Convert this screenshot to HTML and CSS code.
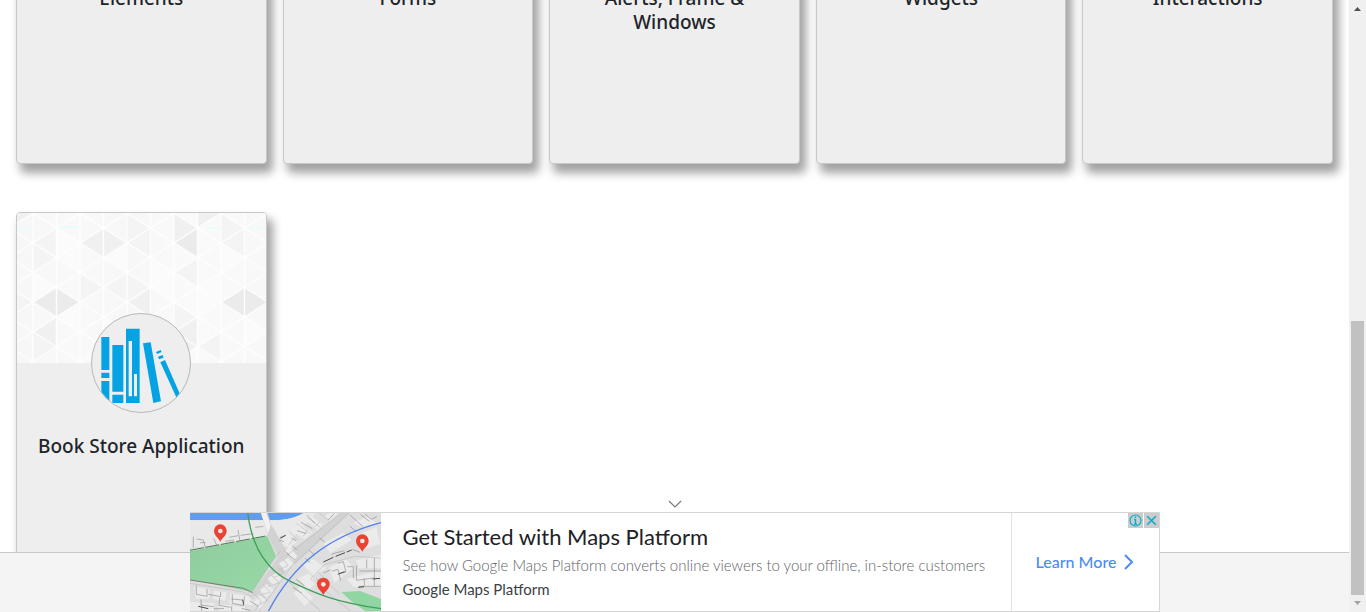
FILE: index.html
```html
<!DOCTYPE html>
<html lang="en">
<head>
<meta charset="utf-8">
<title>DEMOQA</title>
<meta name="viewport" content="width=device-width, initial-scale=1">
<link rel="stylesheet" href="styles.css">
</head>
<body>
<div class="window">
  <div class="view">
    <main class="cards">
      <a class="card" href="#elements"><span class="card-cover"></span><span class="card-avatar"></span><h5 class="card-title">Elements</h5></a>
      <a class="card" href="#forms"><span class="card-cover"></span><span class="card-avatar"></span><h5 class="card-title">Forms</h5></a>
      <a class="card" href="#windows"><span class="card-cover"></span><span class="card-avatar"></span><h5 class="card-title">Alerts, Frame &amp; Windows</h5></a>
      <a class="card" href="#widgets"><span class="card-cover"></span><span class="card-avatar"></span><h5 class="card-title">Widgets</h5></a>
      <a class="card" href="#interaction"><span class="card-cover"></span><span class="card-avatar"></span><h5 class="card-title">Interactions</h5></a>
      <a class="card" href="#books">
        <svg class="card-cover" viewBox="50 39 750 450" preserveAspectRatio="xMidYMid slice" aria-hidden="true">
          <defs>
            <linearGradient id="paper" x1="0" x2="1" y1="0" y2="0">
              <stop offset="0" stop-color="#f7f7f7"/><stop offset=".25" stop-color="#f9f9f9"/><stop offset=".45" stop-color="#f7f7f7"/><stop offset=".7" stop-color="#fafafa"/><stop offset="1" stop-color="#f8f8f8"/>
            </linearGradient>
            <pattern id="mesh" x="100" y="39.5" width="141" height="89" patternUnits="userSpaceOnUse">
              <path d="M0 0V89M141 0V89M70.500 0V89M0 0L141 89M0 89L141 0" fill="none" stroke="#fefefe" stroke-width="4"/>
            </pattern>
          </defs>
          <rect x="50" y="39" width="750" height="450" fill="url(#paper)"/>
          <g fill="#fbfbfb">
            <path d="M170 85L241 128L170 173ZM241 128V218L170 173ZM382 128V218L311 173ZM452 173L523 218L452 263ZM523 218V308L452 263ZM664 128L735 173L664 218ZM664 218V308L593 263ZM593 263L664 308L593 352ZM100 218L170 263L100 308ZM311 352L382 396L311 440ZM241 308V396L170 352ZM735 352L800 396L735 440Z"/>
          </g>
          <g fill="#f3f3f3">
            <path d="M241 218L311 263L241 308ZM382 218V308L311 263ZM382 218L452 263L382 308ZM100 128L170 173L100 218ZM382 39L452 85L382 128ZM593 173V263L523 218ZM523 308L593 352L523 396ZM664 39L735 85L664 128ZM170 85V173L100 128ZM664 396V489L593 440ZM29 263L100 308L29 352ZM735 85V173L664 128ZM100 396L170 440L100 489ZM452 85V173L382 128Z" opacity=".8"/>
          </g>
          <g fill="#f0f0f0">
            <path d="M29 -4V85L100 39ZM523 39L593 85L523 128ZM593 -4L664 39L593 85ZM311 85L382 128L311 173L241 128ZM452 263V352L385 308ZM593 352V440L523 396ZM593 440L560 460V420ZM170 352V440L100 396Z"/>
          </g>
          <g fill="#ebebeb">
            <path d="M593 85V173L523 128ZM170 263L241 308L170 352L100 308ZM735 263L805 308L735 352L664 308Z"/>
          </g>
          <rect x="50" y="39" width="750" height="450" fill="url(#mesh)"/>
          <path d="M52 85H98M180 82H240M622 85H664M750 83H798" stroke="#e6fdfa" stroke-width="6" fill="none"/>
        </svg>
        <span class="card-avatar">
          <svg viewBox="36 42 294 294" aria-hidden="true">
            <g fill="#05a3e4">
              <path d="M64 111H88V210H64ZM64 218H88V234H64ZM64 243H88V309H64ZM97 135H130V275H97ZM97 284H130V309H97Z"/>
              <path fill-rule="evenodd" d="M138 86H179V309H138ZM146 123V289H156V123ZM162 222V289H171V222Z"/>
              <path d="M189 130L212 127L243 304L220 309ZM228 156L242 150L245 156L231 162ZM234 170L248 165L251 173L237 178ZM241 187L255 180L306 296L293 301Z"/>
            </g>
          </svg>
        </span>
        <h5 class="card-title">Book Store Application</h5>
      </a>
    </main>

    <aside class="anchor" aria-label="Advertisement">
      <button class="collapse" type="button" aria-label="Hide advertisement">
        <svg viewBox="0 0 14 8"><path d="M1 1L7 7L13 1" fill="none" stroke="#777" stroke-width="1.200"/></svg>
      </button>
      <div class="ad">
        <svg class="map" viewBox="30 66 573 300" preserveAspectRatio="xMidYMid slice" aria-hidden="true">
          <defs>
            <linearGradient id="park" x1="0" y1="0" x2="1" y2="1"><stop offset="0" stop-color="#8fcb9d"/><stop offset="1" stop-color="#97daa6"/></linearGradient>
            <g id="pin">
              <path d="M0 52C-3 41 -19 34 -19 18A19 19 0 0 1 19 18C19 34 3 41 0 52Z" fill="#ea4335"/>
              <circle cy="19" r="7" fill="#fde9df"/>
            </g>
          </defs>
          <rect x="30" y="66" width="573" height="300" fill="#dedede"/>
          <path d="M30 66H375C350 84 315 90 280 90H30Z" fill="#629ded"/>
          <path d="M30 91H280C320 90 350 84 375 66H410L300 185L270 140L30 175Z" fill="#e9e9e9"/>
          <path d="M242 66H262L275 108C286 118 294 145 325 188L490 66H512L350 218L230 318H210L295 202L262 132Z" fill="#d2d2d2"/>
          <path d="M242 66H258L272 105L264 132Z" fill="#f1f1f1"/>
          <path d="M30 184L262 138L288 198L218 306L30 269Z" fill="url(#park)"/>
          <path d="M30 181L262 137" stroke="#4b7854" stroke-width="3" stroke-dasharray="42 5"/>
          <path d="M30 270L190 295L218 308" fill="none" stroke="#777b77" stroke-width="3"/>
          <path d="M484 306L540 303L603 327V366H560L516 335Z" fill="#91d6a2"/>
          <g fill="#ebebeb">
            <path d="M300 140L320 125L350 155L326 177ZM334 120L352 96L396 128L374 149ZM376 90L392 75L428 104L414 119ZM434 80L450 66H478L450 93ZM312 185L330 170L352 199L340 212Z"/>
            <path d="M262 266L290 247L306 268L279 286ZM240 300L260 281L283 303L258 321ZM297 220L325 202L343 222L315 243ZM222 336L240 316L261 333L244 361Z"/>
            <path d="M445 233L500 207L520 235L463 278ZM528 211L603 194V235H535ZM500 266L603 240V290H520ZM370 226L400 208L438 235L402 259ZM355 265L387 250L408 280L385 299ZM340 310L363 289L400 325L374 348Z"/>
            <path d="M43 290L88 298V326H48ZM100 303L140 306L135 332L99 327ZM151 310L205 319L228 345L148 341ZM30 336L102 340V366H30ZM115 343L195 350V366H115Z"/>
            <path d="M545 130L590 110L600 162L556 176ZM430 160L490 128L516 150L451 190ZM520 98L566 77L588 99L545 112Z"/>
          </g>
          <g fill="none" stroke="#bdbdbd" stroke-width="2">
            <path d="M510 66L338 224L236 366M488 66L326 192M603 204L526 199L435 223L392 266L473 333L516 366M413 245L480 315M327 276L424 366M220 310L244 334L222 366M30 280L190 306L222 325M300 185L206 310"/>
            <path d="M328 125L354 151M350 100L389 130M382 83L421 112M415 68L446 90M343 145L326 164M382 119L369 140M419 95L404 111M310 208L324 227L297 240M292 230L313 250L281 262M274 256L298 278L264 290M249 284L272 307L238 315M242 312L262 330L240 344"/>
          </g>
          <g fill="none" stroke="#8f8f8f" stroke-width="2">
            <path d="M40 173V140M50 147L70 150L76 173M101 145L110 165M136 154L162 150M174 120L180 153M182 136L220 131M226 112L250 109M60 158H77M148 142L174 137"/>
            <path d="M299 143L316 135M297 150L312 155M334 144L348 152M351 122L379 131M363 97L397 116M380 75L405 100M555 72L574 88L590 80M510 75L530 93M463 70L444 91M320 191L344 209M313 183L329 195M338 168L350 179"/>
            <path d="M455 244L474 238L482 272M473 220L490 215L498 246L473 253M430 249L452 239M502 230H520V265M530 226L529 270M538 243H603M560 208V235M583 204V288M529 271L581 264M536 289H603M553 265V289M455 192L493 182M517 178L540 187M510 109L529 125M532 95L550 111M542 74L568 94M418 143L435 157M388 181L405 196M375 204L390 218M348 268L373 287M338 292L366 310M409 266L420 275"/>
            <path d="M49 286V313L81 319V297M85 313L122 320V306M63 328V345L101 350M65 342V366M119 324L117 346L151 352M157 313V340L191 347M154 327L188 330M194 319L190 346M210 333L235 349M101 356H132M155 348V366M185 355L212 362"/>
          </g>
          <g fill="none" stroke="#494949" stroke-width="3"><path d="M430 216L460 202M467 199L495 188M500 186L515 180M301 145L317 136M55 349L85 356M188 329L191 344M535 292L552 290M578 267L600 265M475 252L494 245"/></g>
          <path d="M203 66C215 175 265 245 333 275C405 309 455 334 603 356" fill="none" stroke="#3f9e5a" stroke-width="4"/>
          <path d="M264 366C340 222 445 140 603 98" fill="none" stroke="#527ff0" stroke-width="4"/>
          <use href="#pin" x="121" y="104"/><use href="#pin" x="547" y="134"/><use href="#pin" x="430" y="264"/>
        </svg>
        <div class="ad-copy">
          <a class="ad-headline" href="#maps">Get Started with Maps Platform</a>
          <a class="ad-text" href="#maps">See how Google Maps Platform converts online viewers to your offline, in-store customers</a>
          <a class="ad-brand" href="#maps">Google Maps Platform</a>
        </div>
        <a class="ad-action" href="#maps">Learn More
          <svg viewBox="0 0 10 16" aria-hidden="true"><path d="M1 1L8 8L1 15" fill="none" stroke="#4a8cf7" stroke-width="2"/></svg>
        </a>
        <div class="ad-choices">
          <button type="button" aria-label="Why this ad"><svg viewBox="0 0 15 15"><g fill="none" stroke="#00aecd"><circle cx="7.500" cy="7.500" r="5.500" stroke-width="1.200"/><path d="M7.500 6.300V11M6 6.500H7.500M6 11H9M7.500 3.500V5" stroke-width="1.300"/></g></svg></button>
          <button type="button" aria-label="Close ad"><svg viewBox="0 0 15 15"><path d="M3.200 3.200L11.800 11.800M11.800 3.200L3.200 11.800" fill="none" stroke="#00aecd" stroke-width="1.500"/></svg></button>
        </div>
      </div>
    </aside>
  </div>

  <div class="scrollbar" aria-hidden="true">
    <svg viewBox="0 0 17 17"><path d="M5 11L8.500 7L12 11Z" fill="#505050"/></svg>
    <div class="track"><div class="thumb"></div></div>
    <svg viewBox="0 0 17 17"><path d="M5 6L8.500 10L12 6Z" fill="#a3a3a3"/></svg>
  </div>
</div>
</body>
</html>
```
FILE: styles.css
```css
*, *::before { box-sizing: border-box; }

body {
  margin: 0;
  background: #fff;
  color: #212529;
  font-family: "Noto Sans", "Open Sans", sans-serif;
  overflow: hidden;
}

a { color: inherit; text-decoration: none; }
svg { display: block; }
button { border: 0; padding: 0; background: none; cursor: pointer; }

.window {
  display: grid;
  grid-template-columns: minmax(0, 1fr) 17px;
  height: 100vh;
}

.view {
  position: relative;
  display: flex;
  align-items: flex-end;
  overflow: hidden;
}

/* Category cards */
.cards {
  flex: 1;
  display: grid;
  grid-template-columns: repeat(5, minmax(0, 1fr));
  gap: 48px 16px;
  padding: 0 16px;
}

.card {
  display: flex;
  flex-direction: column;
  align-items: center;
  min-height: 400px;
  border: 1px solid #c8c8c8;
  border-radius: 4px;
  background: #eee;
  box-shadow: 5px 8px 10px 1px rgba(0, 0, 0, 0.37);
  overflow: hidden;
}

.card-cover {
  width: 100%;
  height: 150px;
  background: #f8f8f8;
}

.card-avatar {
  position: relative;
  width: 100px;
  height: 100px;
  margin-top: -50px;
  border: 1px solid #b8b8b8;
  border-radius: 50%;
  background: #eee;
  overflow: hidden;
}

.card-title {
  margin: 0;
  padding: 21px 20px;
  font-size: 19px;
  line-height: 24px;
  font-weight: 500;
  text-align: center;
}

/* Bottom banner */
.anchor {
  position: absolute;
  left: 0;
  right: 0;
  bottom: 0;
  display: flex;
  flex-direction: column;
  align-items: center;
}

.anchor::before {
  content: "";
  position: absolute;
  left: 0;
  right: 0;
  bottom: 0;
  height: 60px;
  border-top: 1px solid #c8c8c8;
  background: #f4f4f4;
}

.collapse {
  padding: 4px 8px;
}

.collapse svg { width: 14px; height: 8px; }

.ad {
  position: relative;
  display: flex;
  width: 100%;
  max-width: 970px;
  height: 100px;
  border: 1px solid #d6d6d6;
  border-left: 0;
  background: #fff;
  font-family: Lato, sans-serif;
}

.map { flex: none; width: 191px; height: 100%; }

.ad-copy {
  flex: 1;
  min-width: 0;
  display: flex;
  flex-direction: column;
  padding: 8px 0 8px 22px;
  white-space: nowrap;
}

.ad-headline { font-size: 22px; line-height: 32px; color: #202124; }
.ad-text { font-size: 15px; line-height: 24px; font-weight: 300; color: #5f6368; }
.ad-brand { font-size: 15px; line-height: 24px; color: #3c4043; }

.ad-action {
  flex: none;
  display: flex;
  align-items: center;
  justify-content: center;
  gap: 8px;
  width: 148px;
  border-left: 1px solid #e2e2e2;
  color: #4a8cf7;
  font-size: 16px;
  line-height: 20px;
  font-weight: 500;
}

.ad-action svg { width: 10px; height: 16px; }

.ad-choices {
  position: absolute;
  top: 0;
  right: 0;
  display: flex;
  gap: 1px;
}

.ad-choices button { width: 15px; height: 15px; background: #ccc; }

/* Scroll bar */
.scrollbar {
  display: grid;
  grid-template-rows: 17px 1fr 17px;
  background: #f0f0f0;
}

.track {
  display: flex;
  align-items: flex-end;
  padding: 0 2px;
}

.thumb {
  width: 100%;
  height: 47.4%;
  background: #c1c1c1;
}
```
